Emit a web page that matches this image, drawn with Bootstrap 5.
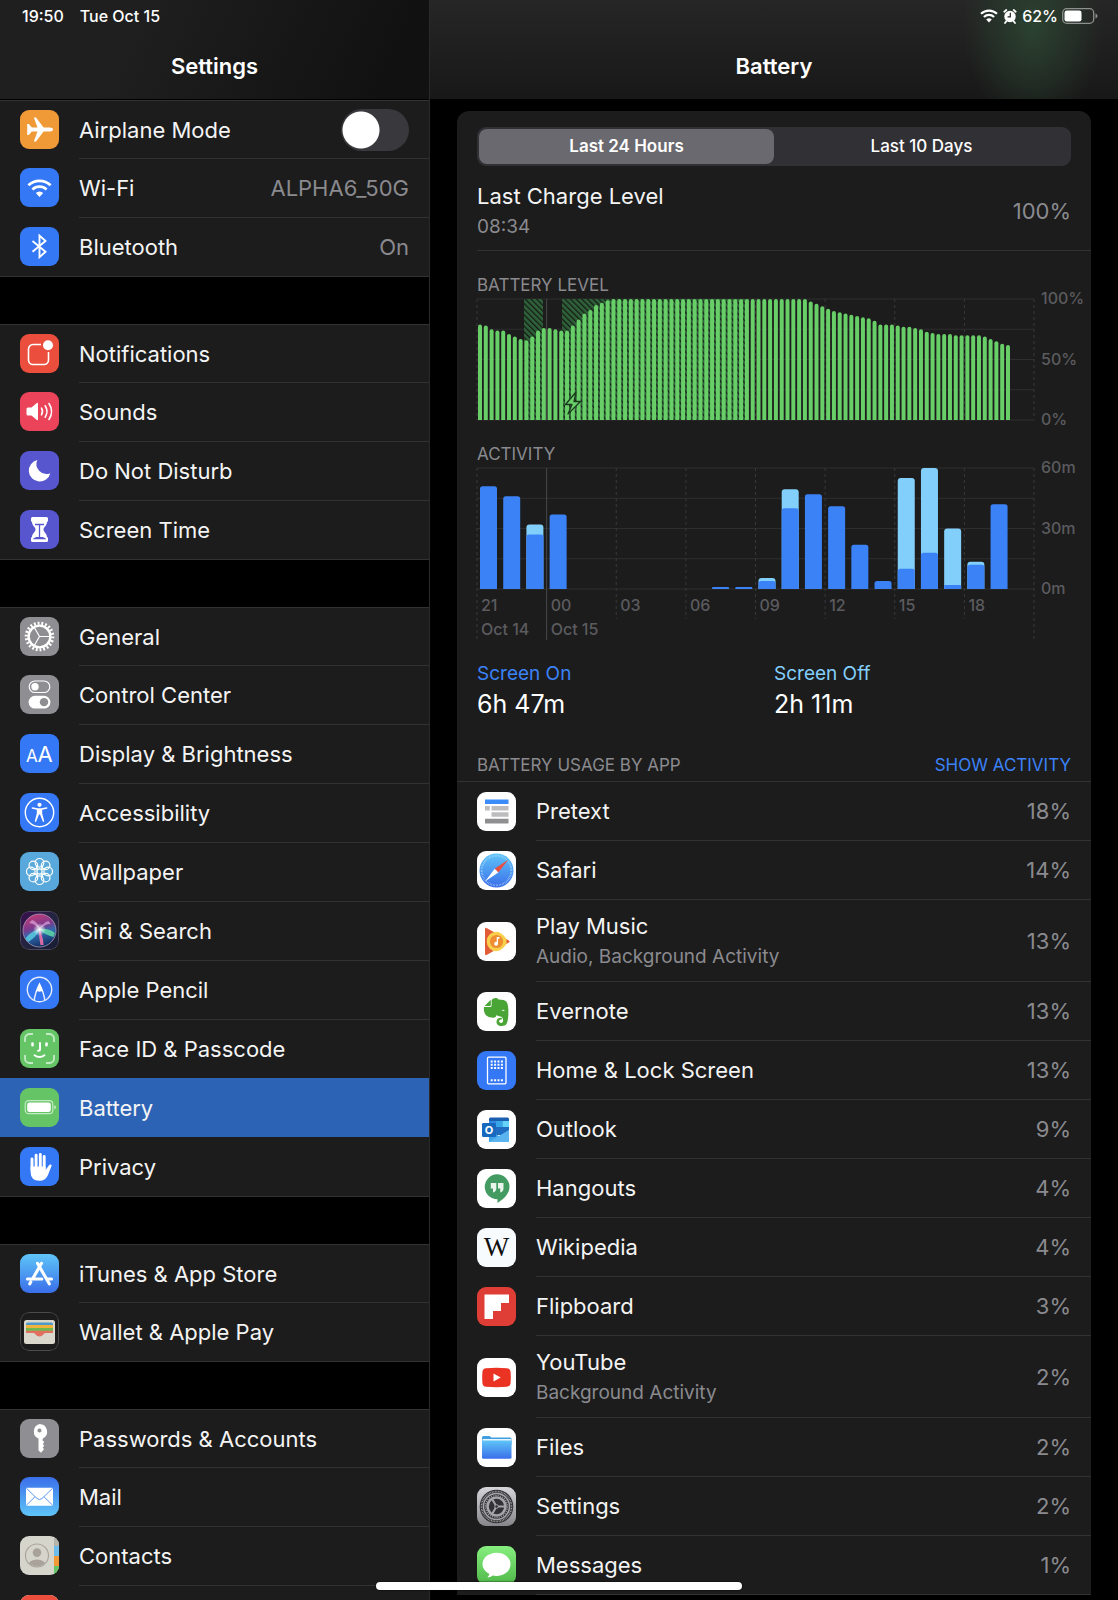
<!DOCTYPE html>
<html lang="en" data-bs-theme="dark">
<head>
<meta charset="utf-8">
<meta name="viewport" content="width=device-width, initial-scale=1">
<title>Settings – Battery</title>
<link href="https://cdn.jsdelivr.net/npm/bootstrap@5.3.0/dist/css/bootstrap.min.css" rel="stylesheet">
<style>
  :root { --pane: #1c1c1c; --line: #323233; --muted: #8a8a8f; --accent: #3b82f7; --sky: #83cffb; }
  body { background: #000; color: #f4f4f4; font-family: Inter, "Liberation Sans", sans-serif; font-size: 22px; line-height: 28px; }
  .sidebar { flex: 0 0 430px; border-right: 1px solid #2a2a2b; }
  .scroller { overflow-y: auto; scrollbar-width: none; }
  .scroller::-webkit-scrollbar { display: none; }
  .bar-top { height: 99px; padding: 0 22px; flex: none; }
  .sidebar .bar-top { height: 100px; background: linear-gradient(115deg, #1f1f1f 30%, #111 90%); border-bottom: 1px solid #000; }
  .detail .bar-top { background: radial-gradient(ellipse 70px 100px at 603px 26px, #2b4230 0, #2b423000 100%), linear-gradient(180deg, #262626, #181818); }
  .status { height: 32px; font-size: 16px; line-height: 32px; font-weight: 500; color: #fff; }
  .bar-top h1, .bar-top h2 { font-size: 22px; line-height: 28px; font-weight: 600; color: #fff; margin: 20px 0 0; text-align: center; }
  .status-right { margin-right: -2px; }

  .set-group { background: var(--pane); border-top: 1px solid var(--line); border-bottom: 1px solid var(--line); margin-bottom: 47px; }
  .set-row { height: 59px; padding-left: 20px; gap: 20px; color: #f4f4f4; text-decoration: none; }
  .set-row:first-child { height: 57px; }
  .set-row .cell { height: 100%; padding-right: 20px; border-top: 1px solid var(--line); }
  .set-row:first-child .cell, .set-row.current .cell, .set-row.current + .set-row .cell { border-top-color: transparent; }
  .set-row.current { background: #2c63b5; }
  .dim { color: var(--muted); }
  .app-ico { width: 39px; height: 39px; border-radius: 9px; flex: none; display: block; }

  .form-switch .form-check-input.big-switch { width: 68px; height: 42px; margin: 0; border: 0; background-color: #39393d;
    background-image: radial-gradient(circle at 20px 21px, #fff 18px, transparent 19px); background-size: 100% 100%; background-position: 0 0; }

  .battery-card { background: var(--pane); margin: 12px 27px 0; border-radius: 12px 12px 0 0; padding: 16px 0 0 20px; }
  .segmented { background: #313035; border-radius: 9px; padding: 2px; height: 39px; margin-right: 20px; }
  .segmented .btn { width: 50%; border: 0; border-radius: 8px; padding: 0; line-height: 35px; font-size: 17px; font-weight: 500; color: #fff; }
  .segmented .btn-check:checked + .btn { background: #6a696f; color: #fff; font-weight: 600; }
  .charge { height: 80px; margin-top: 5px; padding-right: 20px; border-bottom: 1px solid var(--line); }
  .sub-line { font-size: 19px; line-height: 26px; color: var(--muted); }
  .caption { font-size: 17px; line-height: 24px; color: var(--muted); font-weight: 400; margin: 0; }
  .caption-a { margin-top: 22px; }
  .caption-b { margin-top: 12px; }
  .chart { display: block; width: 100%; height: auto; overflow: visible; }
  .chart text { fill: #5b5b5f; font-size: 16px; font-weight: 500; }
  .grid-line { stroke: #2e2e30; stroke-width: 1; fill: none; }
  .grid-dash { stroke: #38383a; stroke-width: 1; stroke-dasharray: 3 3; }
  .totals { margin-top: 19px; padding-right: 20px; }
  .totals dt { font-size: 19px; line-height: 26px; font-weight: 400; }
  .totals dd { font-size: 25px; line-height: 34px; margin: 0; color: #fff; }
  .on-ink { color: var(--accent); }
  .off-ink { color: var(--sky); }
  .usage-head { margin: 32px 0 0 -20px; padding: 0 20px 4px; border-bottom: 1px solid var(--line); }
  .usage-head button { font-size: 17px; line-height: 24px; color: var(--accent); }
  .usage-row { gap: 20px; }
  .usage-row .cell { min-height: 59px; padding-right: 20px; border-bottom: 1px solid var(--line); }
  .usage-row .two { min-height: 82px; }
  .usage-row .sub-line { margin-top: 4px; }
  .home-bar { width: 366px; height: 8px; bottom: 10px; border-radius: 4px; background: #fff; box-shadow: 0 0 2px #000; z-index: 5; }
</style>
</head>
<body>
<div class="d-flex vh-100 overflow-hidden">

  <aside class="sidebar d-flex flex-column">
    <header class="bar-top">
      <div class="status d-flex gap-3"><span>19:50</span><span>Tue Oct 15</span></div>
      <h1>Settings</h1>
    </header>
    <nav class="scroller flex-grow-1" aria-label="Settings">
      <div class="set-group">
        <div class="set-row d-flex align-items-center">
          <svg class="app-ico" viewBox="0 0 39 39"><rect width="39" height="39" fill="#f09a37"/><path fill="#fff" d="M33 19.5c0-1.200-1.400-1.900-3.200-1.900h-6.200l-7.200-9.500c-.3-.4-.6-.5-1.100-.5h-1.500l3.700 10h-5.700l-2.500-3.200c-.2-.3-.5-.4-.9-.4H7.200v11h1.200c.4 0 .7-.1.900-.4l2.500-3.200h5.700l-3.700 10h1.500c.5 0 .8-.1 1.100-.5l7.200-9.500h6.200c1.800 0 3.200-.7 3.200-1.900z"/></svg>
          <div class="cell flex-grow-1 d-flex align-items-center justify-content-between"><label for="airplane">Airplane Mode</label><div class="form-switch p-0 d-flex"><input class="form-check-input big-switch" type="checkbox" role="switch" id="airplane"></div></div>
        </div>
        <a href="#" class="set-row d-flex align-items-center">
          <svg class="app-ico" viewBox="0 0 39 39"><rect width="39" height="39" fill="#3478f6"/><g fill="none" stroke="#fff" stroke-width="2.700"><path d="M8.400 17.300a16 16 0 0 1 22.200 0M12.400 21.500a10.200 10.200 0 0 1 14.200 0"/></g><path fill="#fff" d="M15.800 25.100a5.300 5.300 0 0 1 7.400 0l-3.700 3.900z"/></svg>
          <div class="cell flex-grow-1 d-flex align-items-center justify-content-between"><span>Wi-Fi</span><span class="dim">ALPHA6_50G</span></div>
        </a>
        <a href="#" class="set-row d-flex align-items-center">
          <svg class="app-ico" viewBox="0 0 39 39"><rect width="39" height="39" fill="#3478f6"/><path d="M12.500 14l13 10.800-6 5.400V8.600l6 5.400-13 10.800" fill="none" stroke="#fff" stroke-width="1.900"/></svg>
          <div class="cell flex-grow-1 d-flex align-items-center justify-content-between"><span>Bluetooth</span><span class="dim">On</span></div>
        </a>
      </div>

      <div class="set-group">
        <a href="#" class="set-row d-flex align-items-center">
          <svg class="app-ico" viewBox="0 0 39 39"><rect width="39" height="39" fill="#eb4e3d"/><path d="M21 10.500h-8A4.500 4.500 0 0 0 8.500 15v11a4.500 4.500 0 0 0 4.500 4.500h11a4.500 4.500 0 0 0 4.500-4.500v-8" fill="none" stroke="#fff" stroke-width="1.600"/><circle cx="28" cy="11.200" r="5" fill="#fff"/></svg>
          <div class="cell flex-grow-1 d-flex align-items-center">Notifications</div>
        </a>
        <a href="#" class="set-row d-flex align-items-center">
          <svg class="app-ico" viewBox="0 0 39 39"><rect width="39" height="39" fill="#eb445a"/><path fill="#fff" d="M6.500 17q0-1.500 1.500-1.500h3.500l5-4.300q1.500-1 1.500.6v15.400q0 1.600-1.500.6l-5-4.300H8q-1.500 0-1.500-1.500z"/><g fill="none" stroke="#fff" stroke-width="1.600" stroke-linecap="round"><path d="M21.500 16.200q2 3.300 0 6.600M25.200 13.800q3.600 5.700 0 11.400M29 11.500q5.200 8 0 16"/></g></svg>
          <div class="cell flex-grow-1 d-flex align-items-center">Sounds</div>
        </a>
        <a href="#" class="set-row d-flex align-items-center">
          <svg class="app-ico" viewBox="0 0 39 39"><rect width="39" height="39" fill="#5756ce"/><path fill="#fff" d="M17.300 9A10.900 10.900 0 1 0 30.300 22.200 10 10 0 0 1 17.300 9z"/></svg>
          <div class="cell flex-grow-1 d-flex align-items-center">Do Not Disturb</div>
        </a>
        <a href="#" class="set-row d-flex align-items-center">
          <svg class="app-ico" viewBox="0 0 39 39"><rect width="39" height="39" fill="#5756ce"/><path fill="#fff" d="M12.500 7h14q1.500 0 1.500 1.500v2q0 1.200-1 1.500c0 3.500-3.500 5-3.500 7.500s3.500 4 3.500 7.500q1 .3 1 1.500v2q0 1.500-1.500 1.500h-14Q11 32 11 30.500v-2q0-1.200 1-1.500c0-3.500 3.500-5 3.500-7.500S12 15.500 12 12q-1-.3-1-1.500v-2Q11 7 12.500 7z"/><path fill="none" stroke="#5756ce" stroke-width="1.300" d="M15 14.500h9M19.500 15v12.500M14.500 28.500q1.500-1.200 5-1.200t5 1.200z"/></svg>
          <div class="cell flex-grow-1 d-flex align-items-center">Screen Time</div>
        </a>
      </div>

      <div class="set-group">
        <a href="#" class="set-row d-flex align-items-center">
          <svg class="app-ico" viewBox="0 0 39 39"><rect width="39" height="39" fill="#8e8e93"/><g fill="none" stroke="#fff"><circle cx="19.500" cy="19.500" r="13.300" stroke-width="3" pathLength="44" stroke-dasharray="1 1"/><circle cx="19.500" cy="19.500" r="10.900" stroke-width="2.400"/><path stroke-width="1.200" d="M19.500 19.500H30M19.500 19.500l-5.200-9M19.500 19.500l-5.200 9"/></g></svg>
          <div class="cell flex-grow-1 d-flex align-items-center">General</div>
        </a>
        <a href="#" class="set-row d-flex align-items-center">
          <svg class="app-ico" viewBox="0 0 39 39"><rect width="39" height="39" fill="#8e8e93"/><rect x="9.200" y="6" width="20.600" height="11.500" rx="5.750" fill="none" stroke="#fff" stroke-width="1.200"/><circle cx="15" cy="11.750" r="3.700" fill="#fff"/><rect x="8.600" y="20.800" width="21.800" height="12.700" rx="6.350" fill="#fff"/><circle cx="24" cy="27.150" r="4.200" fill="#8e8e93"/></svg>
          <div class="cell flex-grow-1 d-flex align-items-center">Control Center</div>
        </a>
        <a href="#" class="set-row d-flex align-items-center">
          <svg class="app-ico" viewBox="0 0 39 39"><rect width="39" height="39" fill="#3478f6"/><g fill="#fff" font-family="Inter, sans-serif" font-weight="400"><text x="6" y="27.500" font-size="17">A</text><text x="17.500" y="27.500" font-size="22">A</text></g></svg>
          <div class="cell flex-grow-1 d-flex align-items-center">Display &amp; Brightness</div>
        </a>
        <a href="#" class="set-row d-flex align-items-center">
          <svg class="app-ico" viewBox="0 0 39 39"><rect width="39" height="39" fill="#3478f6"/><circle cx="19.500" cy="19.500" r="14.200" fill="none" stroke="#fff" stroke-width="1.400"/><circle cx="19.500" cy="11.800" r="2.100" fill="#fff"/><path fill="#fff" d="M12.500 14.300l5 1h4l5-1q.9 0 .9.700 0 .5-.7.700l-4.500 1.100v3.700l2 7.500q.1.900-.6 1-.6 0-.9-.7l-2.700-6.900h-1l-2.700 6.900q-.3.700-.9.700-.7-.1-.6-1l2-7.500v-3.700l-4.500-1.100q-.7-.2-.7-.7 0-.7.900-.7z"/></svg>
          <div class="cell flex-grow-1 d-flex align-items-center">Accessibility</div>
        </a>
        <a href="#" class="set-row d-flex align-items-center">
          <svg class="app-ico" viewBox="0 0 39 39"><rect width="39" height="39" fill="#58a8db"/><g fill="none" stroke="#fff" stroke-width="1.200"><circle cx="19.500" cy="10.800" r="4.300"/><circle cx="25.650" cy="13.350" r="4.300"/><circle cx="28.200" cy="19.500" r="4.300"/><circle cx="25.650" cy="25.650" r="4.300"/><circle cx="19.500" cy="28.200" r="4.300"/><circle cx="13.350" cy="25.650" r="4.300"/><circle cx="10.800" cy="19.500" r="4.300"/><circle cx="13.350" cy="13.350" r="4.300"/><circle cx="19.500" cy="19.500" r="2.600"/><path d="M16 13.500l1.500 4M23 13.500l-1.500 4M25.500 16l-4 1.500M25.500 23l-4-1.500M23 25.500l-1.500-4M16 25.500l1.500-4M13.500 23l4-1.500M13.500 16l4 1.500"/></g></svg>
          <div class="cell flex-grow-1 d-flex align-items-center">Wallpaper</div>
        </a>
        <a href="#" class="set-row d-flex align-items-center">
          <svg class="app-ico" viewBox="0 0 39 39"><defs><linearGradient id="siriBg" x1="0" y1="0" x2="1" y2="1"><stop offset="0" stop-color="#3a0d4d"/><stop offset=".5" stop-color="#23243f"/><stop offset="1" stop-color="#161c33"/></linearGradient><linearGradient id="siriOrb" x1=".3" y1="0" x2=".6" y2="1"><stop offset="0" stop-color="#c33a76"/><stop offset=".4" stop-color="#7a3b8e"/><stop offset=".6" stop-color="#2e6cb0"/><stop offset="1" stop-color="#122b5c"/></linearGradient><radialGradient id="siriGlow"><stop offset="0" stop-color="#fff"/><stop offset="1" stop-color="#fff" stop-opacity="0"/></radialGradient></defs><rect x=".5" y=".5" width="38" height="38" rx="8.500" fill="url(#siriBg)" stroke="#4a4560"/><circle cx="19.500" cy="19.500" r="16.500" fill="url(#siriOrb)" stroke="#a99bb8" stroke-width=".8"/><path fill="#5fd8e8" opacity=".75" d="M19.500 18C14 19 7 24 5.500 28l3 3c4-3 9-7 11-13z"/><path fill="#62e0a8" opacity=".8" d="M19.500 18c6-1 12 1 15.500 4l-1.500 4c-4-1-10-3-14-8z"/><path fill="#f06fa9" opacity=".9" d="M19.500 18c2 5 4 10 4 16h-3c-1-5-2-11-1-16z"/><path fill="#e9b7e8" opacity=".6" d="M19.500 18C16 14 12 12 9 12l3-3c4 1 7 5 7.500 9zM19.500 18c2-4 5-7 9-8l2 3c-4 0-8 2-11 5z"/><circle cx="19.500" cy="18.500" r="6.500" fill="url(#siriGlow)"/></svg>
          <div class="cell flex-grow-1 d-flex align-items-center">Siri &amp; Search</div>
        </a>
        <a href="#" class="set-row d-flex align-items-center">
          <svg class="app-ico" viewBox="0 0 39 39"><rect width="39" height="39" fill="#3478f6"/><circle cx="19.500" cy="19.500" r="12.200" fill="none" stroke="#e6eefc" stroke-width="1.400"/><path fill="none" stroke="#e6eefc" stroke-width="1.500" d="M14.200 30.500q.8-7.500 5.300-16.500 4.500 9 5.300 16.500"/><path fill="#fff" d="M19.500 13l3.800 8.700q-1.900-1-3.800 0-1.900-1-3.800 0z"/></svg>
          <div class="cell flex-grow-1 d-flex align-items-center">Apple Pencil</div>
        </a>
        <a href="#" class="set-row d-flex align-items-center">
          <svg class="app-ico" viewBox="0 0 39 39"><rect width="39" height="39" fill="#65c466"/><path fill="none" stroke="#c3eac4" stroke-width="1.800" d="M5 13V9.500A4.500 4.500 0 0 1 9.500 5H13M26 5h3.500A4.500 4.500 0 0 1 34 9.500V13M34 26v3.500a4.500 4.500 0 0 1-4.500 4.500H26M13 34H9.500A4.500 4.500 0 0 1 5 29.500V26"/><g fill="none" stroke="#fff" stroke-width="1.900" stroke-linecap="round"><path stroke-width="2.600" d="M12.500 14.500v1.800M26.500 14.500v1.800"/><path d="M20 14v6.500q0 1.300-2 1.300M14.500 26.200q5 3.600 10 0"/></g></svg>
          <div class="cell flex-grow-1 d-flex align-items-center">Face ID &amp; Passcode</div>
        </a>
        <a href="#" class="set-row current d-flex align-items-center" aria-current="page">
          <svg class="app-ico" viewBox="0 0 39 39"><rect width="39" height="39" fill="#65c466"/><rect x="5.200" y="12.700" width="27.600" height="13" rx="3.500" fill="none" stroke="#c3eac4" stroke-width="1.200"/><rect x="7.200" y="14.500" width="23.600" height="9.400" rx="2.200" fill="#fff"/><path fill="#c3eac4" d="M34.200 17q1.800.7 1.800 2.200t-1.800 2.200z"/></svg>
          <div class="cell flex-grow-1 d-flex align-items-center">Battery</div>
        </a>
        <a href="#" class="set-row d-flex align-items-center">
          <svg class="app-ico" viewBox="0 0 39 39"><rect width="39" height="39" fill="#3478f6"/><g stroke="#fff" stroke-width="2.900" stroke-linecap="round" fill="none"><path d="M12 12v11M16.100 8.300V20M20.300 7.500V20M24.200 9.500V22"/></g><path fill="#fff" d="M10.600 19.500h15v3.500l3.200-4.600q1.200-1.300 2.200-.8 1 .6.400 2-1.700 3.900-3.300 8.100-2.300 6-8.600 6-8.900 0-8.900-8.700z"/></svg>
          <div class="cell flex-grow-1 d-flex align-items-center">Privacy</div>
        </a>
      </div>

      <div class="set-group">
        <a href="#" class="set-row d-flex align-items-center">
          <svg class="app-ico" viewBox="0 0 39 39"><defs><linearGradient id="storeBg" x1="0" y1="0" x2="0" y2="1"><stop offset="0" stop-color="#5fc5f8"/><stop offset="1" stop-color="#3a6eea"/></linearGradient></defs><rect width="39" height="39" fill="url(#storeBg)"/><g fill="none" stroke="#fff" stroke-width="3.100" stroke-linecap="round"><path d="M17.500 9.300l11.800 20.500M21.500 9.300L12.800 24.500M10.800 28l-1 1.800M7.500 25h14.300M27.500 25h4"/></g></svg>
          <div class="cell flex-grow-1 d-flex align-items-center">iTunes &amp; App Store</div>
        </a>
        <a href="#" class="set-row d-flex align-items-center">
          <svg class="app-ico" viewBox="0 0 39 39"><rect x=".5" y=".5" width="38" height="38" rx="8.500" fill="#1c1c1c" stroke="#4a4a4c"/><rect x="4" y="8" width="31" height="24" rx="2.500" fill="#dad7cd"/><path fill="#4e9ac8" d="M6 13v-1q0-1.500 1.500-1.500h24q1.500 0 1.500 1.500v1z"/><path fill="#f2b33d" d="M6 13h27v3H6z"/><path fill="#70b84f" d="M6 16h27v3H6z"/><path fill="#e2705f" d="M6 18.700h27V21h-7q-1.500 0-2.600 1.400-1.600 2.100-3.900 2.100t-3.900-2.100Q14.500 21 13 21H6z"/></svg>
          <div class="cell flex-grow-1 d-flex align-items-center">Wallet &amp; Apple Pay</div>
        </a>
      </div>

      <div class="set-group">
        <a href="#" class="set-row d-flex align-items-center">
          <svg class="app-ico" viewBox="0 0 39 39"><rect width="39" height="39" fill="#8e8e93"/><path fill="#fff" fill-rule="evenodd" d="M19.500 5a7.700 7.700 0 0 1 3.300 14.600l-.3 1.900 1.800 1.500-1.500 2 1.500 1.800-1.600 1.700 1.300 1.700-3 3.600-2.500-2.300v-12A7.700 7.700 0 0 1 19.500 5zm0 4.500a2 2 0 1 0 0 4.100 2 2 0 0 0 0-4.100z"/></svg>
          <div class="cell flex-grow-1 d-flex align-items-center">Passwords &amp; Accounts</div>
        </a>
        <a href="#" class="set-row d-flex align-items-center">
          <svg class="app-ico" viewBox="0 0 39 39"><defs><linearGradient id="mailBg" x1="0" y1="0" x2="0" y2="1"><stop offset="0" stop-color="#3a6eea"/><stop offset="1" stop-color="#5fc5f8"/></linearGradient></defs><rect width="39" height="39" fill="url(#mailBg)"/><rect x="6" y="10.700" width="27" height="18" rx="1" fill="#fff"/><path fill="none" stroke="#4a8fee" stroke-width=".9" d="M6.300 11.200l10.700 10.300q2.500 2.200 5 0l10.700-10.300M6.300 28.300l8.800-8.600M32.700 28.300l-8.800-8.600"/></svg>
          <div class="cell flex-grow-1 d-flex align-items-center">Mail</div>
        </a>
        <a href="#" class="set-row d-flex align-items-center">
          <svg class="app-ico" viewBox="0 0 39 39"><rect width="39" height="39" fill="#d6d5cc"/><path fill="#b5b4ab" d="M34 0h5v10h-5z"/><path fill="#6cbcec" d="M34 10h5v10h-5z"/><path fill="#f09a37" d="M34 20h5v10h-5z"/><path fill="#65c466" d="M34 30h5v9h-5z"/><clipPath id="faceClip"><circle cx="17" cy="19.500" r="10.800"/></clipPath><g fill="#a8a29b" clip-path="url(#faceClip)"><circle cx="17" cy="16.600" r="4.300"/><ellipse cx="17" cy="29.500" rx="9" ry="6"/></g><circle cx="17" cy="19.500" r="11.500" fill="none" stroke="#a8a29b" stroke-width="1.100"/></svg>
          <div class="cell flex-grow-1 d-flex align-items-center">Contacts</div>
        </a>
        <a href="#" class="set-row d-flex align-items-center" aria-label="Calendar">
          <svg class="app-ico" viewBox="0 0 39 39"><rect width="39" height="39" fill="#fff"/><rect width="39" height="13" fill="#eb4e3d"/></svg>
          <div class="cell flex-grow-1"></div>
        </a>
      </div>
    </nav>
  </aside>

  <main class="detail flex-grow-1 d-flex flex-column">
    <header class="bar-top">
      <div class="status status-right d-flex justify-content-end align-items-center">
        <svg width="18" height="16" viewBox="0 0 18 16" class="me-1"><g fill="none" stroke="#fff" stroke-width="2.200"><path d="M1 5.800a11.600 11.600 0 0 1 16 0M3.900 9a7.400 7.400 0 0 1 10.200 0"/></g><path fill="#fff" d="M6.200 11.500a4 4 0 0 1 5.600 0L9 14.600z"/></svg>
        <svg width="16" height="16" viewBox="0 0 16 16" class="me-1"><circle cx="8" cy="8.500" r="5.700" fill="#fff"/><path fill="none" stroke="#fff" stroke-width="1.800" stroke-linecap="round" d="M2.300 3.700l2-1.700M13.700 3.700l-2-1.700M4.300 13.200L3 15M11.700 13.200L13 15"/><path fill="none" stroke="#222" stroke-width="1.200" d="M8.300 4.800v4.100H5.600"/></svg>
        <span class="me-1">62%</span>
        <svg width="36" height="16" viewBox="0 0 36 16"><rect x=".7" y=".7" width="31" height="14.600" rx="4" fill="none" stroke="#8d908e" stroke-width="1.300"/><rect x="2.500" y="2.500" width="17" height="11" rx="2.300" fill="#fff"/><path fill="#8d908e" d="M33.500 5.500q2 .8 2 2.500t-2 2.500z"/></svg>
      </div>
      <h2>Battery</h2>
    </header>

    <div class="scroller flex-grow-1">
      <section class="battery-card">
        <div class="segmented d-flex" role="group" aria-label="Period">
          <input type="radio" class="btn-check" name="period" id="p24" checked><label class="btn" for="p24">Last 24 Hours</label>
          <input type="radio" class="btn-check" name="period" id="p10"><label class="btn" for="p10">Last 10 Days</label>
        </div>
        <div class="charge d-flex align-items-center justify-content-between">
          <div><div>Last Charge Level</div><div class="sub-line mt-1">08:34</div></div>
          <span class="dim">100%</span>
        </div>

        <h3 class="caption caption-a">BATTERY LEVEL</h3>
        <svg class="chart" id="levelChart" viewBox="0 0 614 133" role="img" aria-label="Battery level over the last 24 hours">
          <defs><pattern id="hatch" width="4" height="4" patternUnits="userSpaceOnUse" patternTransform="rotate(-45)"><rect width="4" height="4" fill="#2f6239"/><rect width="1.300" height="4" fill="#151b16"/></pattern></defs>
        </svg>

        <h3 class="caption caption-b">ACTIVITY</h3>
        <svg class="chart" id="activityChart" viewBox="0 0 614 176" role="img" aria-label="Screen activity by hour"></svg>

        <dl class="totals row g-0 mb-0">
          <div class="col-6"><dt class="on-ink">Screen On</dt><dd>6h 47m</dd></div>
          <div class="col-6"><dt class="off-ink">Screen Off</dt><dd>2h 11m</dd></div>
        </dl>

        <div class="usage-head d-flex justify-content-between align-items-center">
          <h3 class="caption">BATTERY USAGE BY APP</h3>
          <button type="button" class="btn p-0 border-0">SHOW ACTIVITY</button>
        </div>

        <ul class="list-unstyled mb-0">
          <li class="usage-row d-flex align-items-center">
            <svg class="app-ico" viewBox="0 0 39 39"><rect width="39" height="39" fill="#fff"/><path fill="#3b8cf8" d="M8 7.500h23.500V12H8z"/><path fill="#bdbdbf" d="M8 14h4.800v4.500H8zM14.500 14h17v4.500h-17zM14.500 20.300h17v4.500h-17z"/><path fill="#8f8f91" d="M8 26.800h23.500v4.700H8z"/></svg>
            <div class="cell flex-grow-1 d-flex align-items-center justify-content-between"><span>Pretext</span><span class="dim">18%</span></div>
          </li>
          <li class="usage-row d-flex align-items-center">
            <svg class="app-ico" viewBox="0 0 39 39"><rect width="39" height="39" fill="#fff"/><circle cx="19.500" cy="19.500" r="17" fill="url(#storeBg)"/><circle cx="19.500" cy="19.500" r="14.800" fill="none" stroke="#d5ecfd" stroke-width="2" pathLength="120" stroke-dasharray=".6 1.400" opacity=".8"/><path fill="#eb4e3d" d="M31.200 8.700L21.300 21.500l-3.600-3.800z"/><path fill="#fff" d="M8 30.500l9.700-12.800 3.600 3.800z"/></svg>
            <div class="cell flex-grow-1 d-flex align-items-center justify-content-between"><span>Safari</span><span class="dim">14%</span></div>
          </li>
          <li class="usage-row d-flex align-items-center">
            <svg class="app-ico" viewBox="0 0 39 39"><rect width="39" height="39" fill="#fff"/><path fill="#e25c37" d="M8 7.200Q8 5 10 6.200l21.500 12q2 1.300 0 2.600L10 32.800Q8 34 8 31.800z"/><path fill="#f9d04b" d="M19.500 9.700q5 .2 10 7.200v5.200q-5 7-10 7.200a9.800 9.800 0 0 1 0-19.600z"/><circle cx="19.500" cy="19.500" r="6.600" fill="#ee8e33"/><path fill="#fff" d="M19.700 15h2.800v1.800H21v5a1.900 1.900 0 1 1-1.300-1.800z"/></svg>
            <div class="cell two flex-grow-1 d-flex align-items-center justify-content-between"><div><div>Play Music</div><div class="sub-line">Audio, Background Activity</div></div><span class="dim">13%</span></div>
          </li>
          <li class="usage-row d-flex align-items-center">
            <svg class="app-ico" viewBox="0 0 39 39"><rect width="39" height="39" fill="#fff"/><path fill="#49a535" d="M15.500 7q2.500-1.500 4.700-.8 1 .5 1.300 1.300c4 0 6.800.7 7.800 2.100 1.700 2.200 2.100 6.400 2.100 10.400 0 5.500-.6 9-1.700 11.500-1 1.800-2.700 2.500-5.200 2.500-3.500 0-5-2-5-4.300 0-2.700 2-4 4.700-4 .9.100 1 1.500.2 1.700-1.600.1-2.400.9-2.300 2.200.2 1.500 2.700 1.900 3.600.5.900-1.700.4-5-2.200-5.600-2-.4-3.200-.6-3.700-1.800-.9 2.900-2.700 3.300-5.500 2.900-3.700-.5-5.600-1.700-6.700-4.500q-1.200-3.500-.5-6.100h6q1.500 0 1.500-1.500V8.500z"/><path fill="#49a535" d="M13.800 7.700v5.300q0 1-.8 1H7.600z"/><path fill="#fff" d="M24.600 18.800q1.500-2 3.300.3-1.600-.4-3.300-.3z"/></svg>
            <div class="cell flex-grow-1 d-flex align-items-center justify-content-between"><span>Evernote</span><span class="dim">13%</span></div>
          </li>
          <li class="usage-row d-flex align-items-center">
            <svg class="app-ico" viewBox="0 0 39 39"><rect width="39" height="39" fill="#3478f6"/><rect x="10.500" y="6.200" width="18.500" height="26.600" rx="1" fill="none" stroke="#fff" stroke-width="1.300"/><g stroke="#fff" stroke-width="2" stroke-dasharray="2 1.400"><path d="M13.700 10.500h12.200M13.700 13.700h12.200M13.700 16.900h12.200M13.700 29.300h12.200"/></g></svg>
            <div class="cell flex-grow-1 d-flex align-items-center justify-content-between"><span>Home &amp; Lock Screen</span><span class="dim">13%</span></div>
          </li>
          <li class="usage-row d-flex align-items-center">
            <svg class="app-ico" viewBox="0 0 39 39"><rect width="39" height="39" fill="#fff"/><path fill="#1c5fb0" d="M12 9q0-1.500 1.500-1.500h17Q32 7.500 32 9v11H12z"/><path fill="#2f8be0" d="M12 11h7v6h-7z"/><path fill="#37a7ea" d="M19 11h6.500v6H19z"/><path fill="#66d3fb" d="M25.500 11H32v6h-6.500z"/><path fill="#1f6dc2" d="M12 17h20v8H12z"/><path fill="#3fa4ea" d="M12 32V20.500l10 5.500 10-6v11q0 1-1 1z"/><path fill="#67bdf1" d="M12 32l20-12V31q0 1-1 1z" opacity=".65"/><rect x="5" y="13" width="14" height="14" rx="1.300" fill="#1769bd"/><text x="12" y="24" text-anchor="middle" font-family="Inter, sans-serif" font-weight="700" font-size="11" fill="#fff">O</text></svg>
            <div class="cell flex-grow-1 d-flex align-items-center justify-content-between"><span>Outlook</span><span class="dim">9%</span></div>
          </li>
          <li class="usage-row d-flex align-items-center">
            <svg class="app-ico" viewBox="0 0 39 39"><rect width="39" height="39" fill="#fff"/><path fill="#439b62" d="M20 5.300a12.500 12.500 0 0 1 12.500 12.500c0 6.500-5 12-12 16.200v-3.700A12.500 12.500 0 1 1 20 5.300z"/><path fill="#e8f4ec" d="M13.800 14h5.500v5.500q0 3-3.300 4v-4h-2.200zM21 14h5.500v5.500q0 3-3.300 4v-4H21z"/></svg>
            <div class="cell flex-grow-1 d-flex align-items-center justify-content-between"><span>Hangouts</span><span class="dim">4%</span></div>
          </li>
          <li class="usage-row d-flex align-items-center">
            <svg class="app-ico" viewBox="0 0 39 39"><rect width="39" height="39" fill="#f8fbfd"/><text x="19.500" y="28" text-anchor="middle" font-family="'Liberation Serif', serif" font-size="27" fill="#111">W</text></svg>
            <div class="cell flex-grow-1 d-flex align-items-center justify-content-between"><span>Wikipedia</span><span class="dim">4%</span></div>
          </li>
          <li class="usage-row d-flex align-items-center">
            <svg class="app-ico" viewBox="0 0 39 39"><rect width="39" height="39" fill="#df3e36"/><path fill="#fff" d="M7.500 7.500H32V16h-8v8h-8v8H7.500z"/></svg>
            <div class="cell flex-grow-1 d-flex align-items-center justify-content-between"><span>Flipboard</span><span class="dim">3%</span></div>
          </li>
          <li class="usage-row d-flex align-items-center">
            <svg class="app-ico" viewBox="0 0 39 39"><rect width="39" height="39" fill="#fff"/><path fill="#ea3323" d="M9 10.300q10.500-.9 21 0 3.200.3 3.500 3.200.6 6 0 12-.3 2.900-3.500 3.200-10.500.9-21 0-3.200-.3-3.500-3.200-.6-6 0-12 .3-2.900 3.500-3.200z"/><path fill="#fff" d="M16.500 15.500l7.200 4-7.200 4z"/></svg>
            <div class="cell two flex-grow-1 d-flex align-items-center justify-content-between"><div><div>YouTube</div><div class="sub-line">Background Activity</div></div><span class="dim">2%</span></div>
          </li>
          <li class="usage-row d-flex align-items-center">
            <svg class="app-ico" viewBox="0 0 39 39"><rect width="39" height="39" fill="#fff"/><path fill="#3f9fdf" d="M5 9.500Q5 8 6.500 8H12q1 0 1.500.7l.7.800H33q1.500 0 1.500 1.500v6H5z"/><rect x="5.500" y="11" width="28.500" height="3" fill="#e8f5fd"/><path fill="url(#storeBg)" d="M5 12.500h29.500v16.800q0 1.500-1.500 1.500H6.500Q5 30.800 5 29.300z"/></svg>
            <div class="cell flex-grow-1 d-flex align-items-center justify-content-between"><span>Files</span><span class="dim">2%</span></div>
          </li>
          <li class="usage-row d-flex align-items-center">
            <svg class="app-ico" viewBox="0 0 39 39"><defs><linearGradient id="cogBg" x1="0" y1="0" x2="0" y2="1"><stop offset="0" stop-color="#d6d6da"/><stop offset="1" stop-color="#87878b"/></linearGradient></defs><rect width="39" height="39" fill="url(#cogBg)"/><circle cx="19.500" cy="19.500" r="16.800" fill="#323234"/><g fill="none" stroke="#a6a6aa"><circle cx="19.500" cy="19.500" r="15" stroke-width="1.600" pathLength="120" stroke-dasharray="1 1"/><circle cx="19.500" cy="19.500" r="13" stroke-width="1.500"/><circle cx="19.500" cy="19.500" r="9" stroke-width="2.600"/><path stroke-width="2" d="M19.500 19.500H29M19.500 19.500l-5-8.500M19.500 19.500l-5 8.500"/></g><circle cx="19.500" cy="19.500" r="11" fill="none" stroke="#a6a6aa" stroke-width="1.200" pathLength="60" stroke-dasharray="1 1"/><circle cx="19.500" cy="19.500" r="1.800" fill="#323234" stroke="#a6a6aa"/></svg>
            <div class="cell flex-grow-1 d-flex align-items-center justify-content-between"><span>Settings</span><span class="dim">2%</span></div>
          </li>
          <li class="usage-row d-flex align-items-center">
            <svg class="app-ico" viewBox="0 0 39 39"><defs><linearGradient id="msgBg" x1="0" y1="0" x2="0" y2="1"><stop offset="0" stop-color="#86ef80"/><stop offset="1" stop-color="#4fb849"/></linearGradient></defs><rect width="39" height="39" fill="url(#msgBg)"/><path fill="#fff" d="M19.500 6.800c8 0 14 5 14 11.500s-6 11.600-14 11.600q-2 0-3.800-.4-2.200 1.900-5.400 1.900 1.800-1.500 2-3.600c-4-2-6.800-5.500-6.800-9.500 0-6.500 6-11.500 14-11.500z"/></svg>
            <div class="cell flex-grow-1 d-flex align-items-center justify-content-between"><span>Messages</span><span class="dim">1%</span></div>
          </li>
        </ul>
      </section>
    </div>
  </main>
</div>
<div class="home-bar position-fixed start-50 translate-middle-x"></div>

<script src="https://cdn.jsdelivr.net/npm/bootstrap@5.3.0/dist/js/bootstrap.bundle.min.js"></script>
<script>
(() => {
  // Battery level in percent, one value per quarter of an hour, from 21:00
  const level = [79,78,75,74,74,71,69,67,66,69,74,76,76,75,74,74,78,83,88,91,95,97,99]
    .concat(Array(34).fill(100),
    [98,96,94,92,90,89,88,87,86,85,84,82,79,79,79,78,77,77,76,75,73,72,71,71,71,70,70,70,70,70,69,67,65,63,62]);
  // Minutes of each hour: [screen on, screen off]
  const activity = { 0:[51,0], 1:[46,0], 2:[27,5], 3:[37,0], 10:[1,0], 11:[1,0], 12:[4,1.5], 13:[40,9.5], 14:[47,0],
    15:[41,0], 16:[22,0], 17:[4,0], 18:[10,45], 19:[18,42], 20:[2,28], 21:[12,1.5], 22:[42,0] };
  const W = 557, H = 121, HOUR = W / 24, TOP = 2;
  const line = (x1, y1, x2, y2, cls) => `<line x1="${x1}" y1="${y1}" x2="${x2}" y2="${y2}" class="${cls}"/>`;
  const bar = (x, w, h, r, fill) => {
    const y = TOP + H - h; r = Math.min(r, h);
    return `<path fill="${fill}" d="M${x} ${TOP + H}V${y + r}q0 ${-r} ${r} ${-r}h${w - 2 * r}q${r} 0 ${r} ${r}V${TOP + H}z"/>`;
  };
  const frame = (bottoms, labels) => {
    let s = '';
    for (let i = 0; i <= 4; i++) s += line(0, TOP + i * H / 4, W, TOP + i * H / 4, 'grid-line');
    for (let i = 0; i <= 8; i++) s += line(i * 3 * HOUR, TOP, i * 3 * HOUR, bottoms(i), i === 1 ? 'grid-line day-line' : 'grid-dash');
    labels.forEach((t, i) => s += `<text x="564" y="${TOP + i * H / 2 + 5}">${t}</text>`);
    return s;
  };

  let a = frame(() => TOP + H, ['100%', '50%', '0%']);
  for (const [x, w] of [[47, 19], [85, 187]]) a += `<rect x="${x}" y="${TOP}" width="${w}" height="${H}" fill="url(#hatch)"/>`;
  level.forEach((v, i) => { a += bar(i * HOUR / 4 + 1, 4, H * v / 100, 2, '#68ce67'); });
  a += '<path d="M99 95l-10.500 12.500h6.500L91 117l12.500-12.500H97z" fill="#68ce67" stroke="#1b3a1e" stroke-width="1.300" stroke-linejoin="round"/>';
  document.getElementById('levelChart').insertAdjacentHTML('beforeend', a);

  let b = frame(i => i === 0 || i === 1 || i === 8 ? 174 : 153, ['60m', '30m', '0m']);
  for (const [h, [on, off]] of Object.entries(activity)) {
    const x = h * HOUR + 3;
    if (off) b += bar(x, 17, H * (on + off) / 60, 3, '#83cffb');
    b += bar(x, 17, H * on / 60, on > 2 ? 2.5 : 1, '#3b82f7');
  }
  ['21', '00', '03', '06', '09', '12', '15', '18'].forEach((t, i) => b += `<text x="${i * 3 * HOUR + 4}" y="145">${t}</text>`);
  b += `<text x="4" y="169">Oct 14</text><text x="${3 * HOUR + 4}" y="169">Oct 15</text>`;
  document.getElementById('activityChart').innerHTML = b;
  document.querySelectorAll('.day-line').forEach(l => l.style.stroke = '#48484a');
})();
</script>
</body>
</html>
